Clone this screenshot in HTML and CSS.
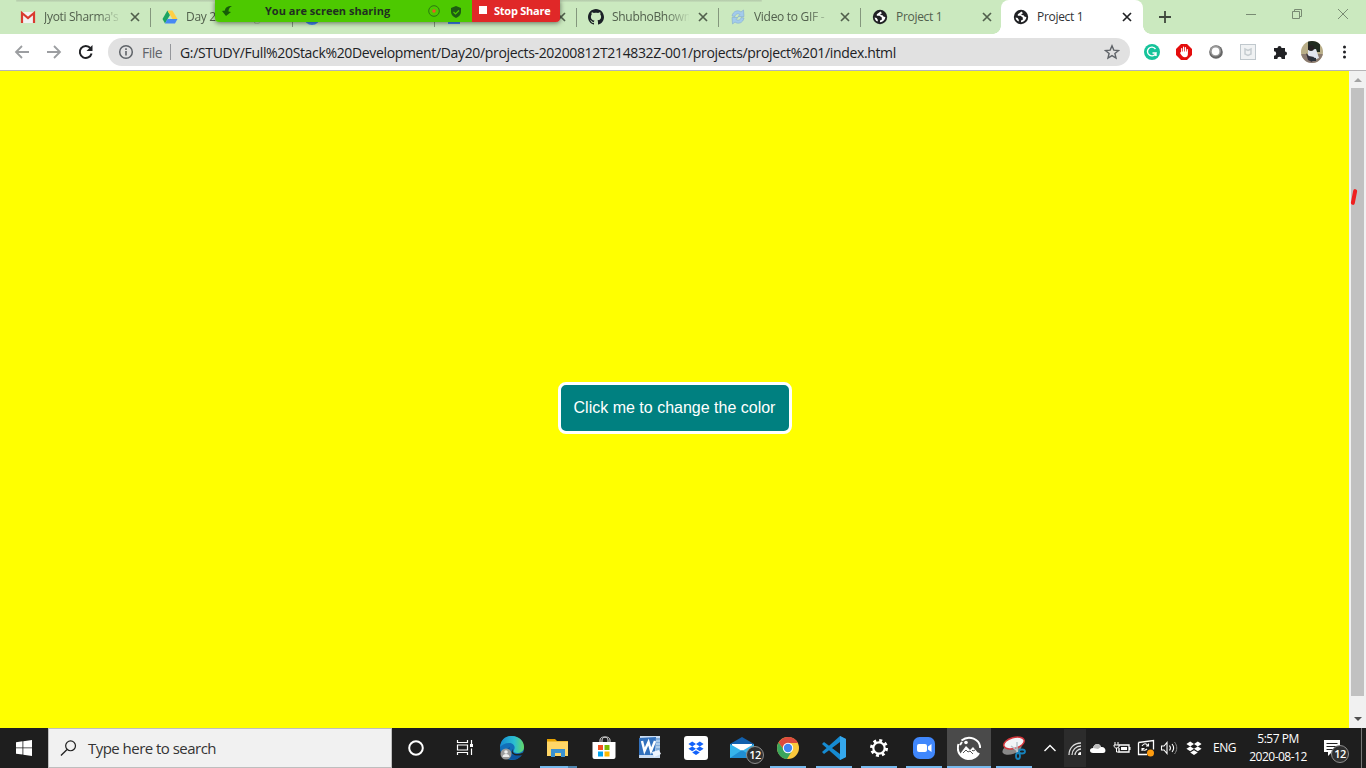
FILE: index.html
```html
<!DOCTYPE html>
<html lang="en">
<head>
<meta charset="utf-8">
<title>Project 1</title>
<link rel="stylesheet" href="styles.css">
</head>
<body>
<svg class="defs" width="0" height="0">
  <symbol id="close" viewBox="0 0 10 10"><path d="M1 1l8 8M9 1L1 9" stroke="currentColor" stroke-width="1.7" fill="none"/></symbol>
  <symbol id="globe" viewBox="0 0 16 16"><circle cx="8" cy="8" r="7.2" fill="#202124"/><path d="M8.500 2.600L6.500 4l-1.700 1.200v1.600h2.700l2.300 1.700v2.200l-1.800.8v1.700c3-.2 5.200-2.400 5.400-5.200l-1.700-.3-1.200-1.400-2-.2v-1.200l1.500-.6zM2.600 8.500c.3 1.900 1.300 3.300 3 4.100l.3-1.700-1.300-2z" fill="#fff"/></symbol>
  <symbol id="box" viewBox="0 0 16 15"><path d="M4.2.6L8 3 4.2 5.400.4 3zM11.800.6L15.600 3l-3.800 2.400L8 3zM.4 7.800l3.800-2.400L8 7.800l-3.800 2.400zM8 7.800l3.800-2.400 3.800 2.400-3.800 2.400zM4.200 11.500L8 9.200l3.800 2.300L8 14z" fill="currentColor"/></symbol>
</svg>
<div class="screen">
  <header class="tabs">
    <div class="tab"><svg class="fav" viewBox="0 0 16 16"><path d="M1 3h14v11H1z" fill="#f1f1f1"/><path d="M2 14V4l6 5 6-5v10" fill="none" stroke="#d93a2f" stroke-width="2.200"/></svg><span class="name fade">Jyoti Sharma's</span><svg class="x"><use href="#close"/></svg></div>
    <div class="tab"><svg class="fav" viewBox="0 0 16 16"><path d="M5.400 1.500L.5 10 3 14.500 8 6z" fill="#1da462"/><path d="M5.400 1.500h5L15.500 10h-5z" fill="#ffcf44"/><path d="M5.500 10h10L13 14.500H3z" fill="#4688f4"/></svg><span class="name fade">Day 20 - Goog</span><svg class="x"><use href="#close"/></svg></div>
    <div class="tab"><svg class="fav" viewBox="0 0 16 16"><circle cx="8" cy="8" r="8" fill="#4285f4"/></svg></div>
    <div class="tab"><svg class="fav" viewBox="0 0 16 16"><path d="M2 1h12v14H2z" fill="#4285f4"/></svg><span class="name"></span><svg class="x"><use href="#close"/></svg></div>
    <div class="tab"><svg class="fav" viewBox="0 0 16 16"><path d="M8 0C3.600 0 0 3.600 0 8c0 3.500 2.300 6.500 5.500 7.600.4.1.5-.2.5-.4v-1.400c-2.200.5-2.700-1-2.700-1-.4-.9-.9-1.100-.9-1.100-.7-.5.1-.5.1-.5.8.1 1.200.8 1.200.8.7 1.300 1.900.9 2.300.7.1-.5.3-.9.5-1.100-1.800-.2-3.600-.9-3.600-4 0-.9.3-1.600.8-2.200-.1-.2-.4-1 .1-2.100 0 0 .7-.2 2.200.8 1.300-.4 2.700-.4 4 0 1.500-1 2.200-.8 2.200-.8.4 1.100.2 1.900.1 2.100.5.6.8 1.300.8 2.200 0 3.100-1.900 3.700-3.700 3.900.3.3.6.8.6 1.500v2.200c0 .2.1.5.6.4C13.700 14.500 16 11.500 16 8c0-4.400-3.600-8-8-8z" fill="#1b2126"/></svg><span class="name fade">ShubhoBhowm</span><svg class="x"><use href="#close"/></svg></div>
    <div class="tab"><svg class="fav" viewBox="0 0 16 16"><path d="M2 7C3 2 8 .5 11 3l2.500-2 .5 6.500H8l2-2C7.500 4 5.500 5 5 7.500zM14 9c-1 5-6 6.500-9 4l-2.500 2L2 8.500h6l-2 2c2.500 1.500 4.500.5 5-2z" fill="#a3cbec" stroke="#7fabd2" stroke-width=".6"/></svg><span class="name fade">Video to GIF -</span><svg class="x"><use href="#close"/></svg></div>
    <div class="tab"><svg class="fav"><use href="#globe"/></svg><span class="name">Project 1</span><svg class="x"><use href="#close"/></svg></div>
    <div class="tab active"><svg class="fav"><use href="#globe"/></svg><span class="name">Project 1</span><svg class="x"><use href="#close"/></svg></div>
    <svg class="plus" viewBox="0 0 12 12"><path d="M6 0v12M0 6h12" stroke="#40483d" stroke-width="1.800"/></svg>
    <div class="window-buttons">
      <svg viewBox="0 0 12 12"><path d="M1 6.500h10" /></svg>
      <svg viewBox="0 0 12 12"><path d="M1.500 3.500h7v7h-7zM3.500 3V1.500h7v7H9"/></svg>
      <svg viewBox="0 0 12 12"><path d="M1 1l10 10M11 1L1 11"/></svg>
    </div>
  </header>
  <div class="top-shadow"></div>
  <div class="share">
    <div class="share-green">
      <svg class="share-arrow" viewBox="0 0 12 12"><path d="M11 1C6 1 4 3 4 5.500L1 6l4 5 5-4-2.500-.6C7.500 4 8.500 2 11 1z" fill="#165d08"/></svg>
      <span class="share-text">You are screen sharing</span>
      <svg class="rec" viewBox="0 0 12 12"><circle cx="6" cy="6" r="5.300" fill="none" stroke="#2b7a12"/><circle cx="6" cy="6" r="1.700" fill="#f05328"/></svg>
      <svg class="shield" viewBox="0 0 12 12"><path d="M6 0l5 2v4c0 3-2.500 5-5 6-2.500-1-5-3-5-6V2z" fill="#1d5d12"/><path d="M3.500 6l2 2 3.500-3.500" fill="none" stroke="#4dc900" stroke-width="1.200"/></svg>
    </div>
    <div class="share-stop"><i class="stop"></i><span>Stop Share</span></div>
  </div>
  <nav class="toolbar">
    <div class="nav-icons">
      <svg viewBox="0 0 16 16"><path d="M15 8H2M8 2L2 8l6 6" stroke="#9c9ea1"/></svg>
      <svg viewBox="0 0 16 16"><path d="M1 8h13M8 2l6 6-6 6" stroke="#9c9ea1"/></svg>
      <svg viewBox="0 0 16 16"><path d="M13.600 9.500A6 6 0 1 1 12.500 4.200" stroke="#202124" stroke-width="2"/><path d="M14.500 1v6h-6z" fill="#202124"/></svg>
    </div>
    <div class="address">
      <svg class="info" viewBox="0 0 16 16"><circle cx="8" cy="8" r="6.300" fill="none" stroke="#5f6368" stroke-width="1.500"/><path d="M8 7v4.500M8 4.300V6" stroke="#5f6368" stroke-width="1.600"/></svg>
      <span class="scheme">File</span><i class="bar"></i>
      <span class="url">G:/STUDY/Full%20Stack%20Development/Day20/projects-20200812T214832Z-001/projects/project%201/index.html</span>
      <svg class="star" viewBox="0 0 16 16"><path d="M8 1.800l1.800 4.300 4.700.4-3.600 3 1.100 4.600-4-2.500-4 2.500 1.100-4.600-3.600-3 4.700-.4z" fill="none" stroke="#5f6368" stroke-width="1.400"/></svg>
    </div>
    <div class="extensions">
      <svg viewBox="0 0 16 16"><circle cx="8" cy="8" r="8" fill="#15c39a"/><path d="M11.500 5A4.400 4.400 0 1 0 12 9H8.500M12 9v3" fill="none" stroke="#fff" stroke-width="1.400"/></svg>
      <svg viewBox="0 0 16 16"><path d="M5 0h6l5 5v6l-5 5H5l-5-5V5z" fill="#e40d0d"/><path d="M5.700 8V4.500M7.600 8V3.200M9.500 8V3.700M11.300 8V5.500" stroke="#fff" stroke-width="1.200" stroke-linecap="round"/><path d="M5.200 7.500h6.700V10c0 2-1 3.300-3 3.300S6 12 4 9z" fill="#fff"/></svg>
      <svg viewBox="0 0 16 16"><circle cx="8" cy="8" r="6.800" fill="#666"/><circle cx="7.500" cy="7" r="5.500" fill="#999"/><circle cx="7.600" cy="7.400" r="3.800" fill="#fff"/></svg>
      <svg viewBox="0 0 16 16"><rect x=".5" y=".5" width="15" height="15" fill="#f0f2f3" stroke="#c0c8cd"/><path d="M5 5l3 1.500L11 5v5l-3 1.500L5 10z" fill="none" stroke="#c6cdd1" stroke-width="1.500"/></svg>
      <svg viewBox="0 0 16 16"><path d="M2 4h3.500a2 2 0 1 1 4 0H13v3.500a2 2 0 1 1 0 4V15H9.700a2.200 2.200 0 0 0-4.400 0H2v-3.300a2.200 2.200 0 0 0 0-4.400z" fill="#202124"/></svg>
      <svg class="avatar" viewBox="0 0 22 22"><clipPath id="face"><circle cx="11" cy="11" r="11"/></clipPath><g clip-path="url(#face)"><path d="M0 0h22v22H0z" fill="#b9ae88"/><path d="M7 0h12v11H7z" fill="#202b20"/><path d="M0 13h22v9H0z" fill="#8b7b70"/><path d="M7 9l8-1 3 9-5 2-6-3z" fill="#e1e5ef"/><circle cx="10" cy="7" r="3" fill="#252121"/><path d="M5 12l3 3 5 1-2 5-4-2z" fill="#36313a"/><path d="M9 16l6 1v3h-5z" fill="#29313a"/></g></svg>
      <svg viewBox="0 0 16 16"><g fill="#202124"><circle cx="8.500" cy="3" r="1.500"/><circle cx="8.500" cy="8" r="1.500"/><circle cx="8.500" cy="13" r="1.500"/></g></svg>
    </div>
  </nav>
  <div class="viewport">
    <main class="page"><button class="color-button">Click me to change the color</button></main>
    <div class="scrollbar"><i class="up"></i><div class="thumb"></div><i class="down"></i></div>
    <i class="pen-mark"></i>
  </div>
  <footer class="taskbar">
    <div class="start"><svg viewBox="0 0 16 16"><path d="M0 2.200l6.500-.9v6.200H0zM7.300 1.200L16 0v7.500H7.300zM0 8.300h6.500v6.300L0 13.700zM7.300 8.300H16V16l-8.700-1.300z" fill="#fff"/></svg></div>
    <div class="search"><svg viewBox="0 0 18 18"><circle cx="11.200" cy="6.700" r="5.200" fill="none" stroke="#222" stroke-width="1.300"/><path d="M7.500 10.500L1 17" stroke="#222" stroke-width="1.400"/></svg><span>Type here to search</span></div>
    <div class="apps">
      <div class="app"><svg viewBox="0 0 24 24"><circle cx="12" cy="12" r="6.800" fill="none" stroke="#fff" stroke-width="2"/></svg></div>
      <div class="app"><svg viewBox="0 0 24 24"><path d="M4.500 4v2.500h10V4M4.500 19v-2.500h10V19M4.500 9h10v5h-10zM18.500 4v4M18.500 12.500V19" fill="none" stroke="#fff" stroke-width="1.200"/><path d="M17 8h3v3h-3z" fill="#fff"/></svg></div>
      <div class="app"><svg viewBox="0 0 24 24"><defs><linearGradient id="edge"><stop stop-color="#168bd2"/><stop offset=".6" stop-color="#2bbfd1"/><stop offset="1" stop-color="#65d866"/></linearGradient></defs><circle cx="12" cy="12" r="12" fill="#126fb9"/><path d="M0 11C1 3 6 0 12 0c7 0 12 5 12 11 0 4-3 6-7 6-3 0-4-1-3-3 2-4-1-7-5-7-4 0-7 2-9 4z" fill="url(#edge)"/><path d="M10 11c-2 6 3 10 11 8l1-1c-2 4-7 7-12 5-5-3-5-10 0-12z" fill="#0c55a0"/><path d="M13 13c-2 4 3 6.500 9 4l2-1v2l-2 1c-8 2-13-2-9-6z" fill="#202020"/><circle cx="6" cy="18" r="5.500" fill="#9b9b9b"/><circle cx="6" cy="16" r="1.800" fill="#eee"/><path d="M2.500 21c0-4 7-4 7 0z" fill="#eee"/></svg></div>
      <div class="app explorer"><svg viewBox="0 0 24 24"><path d="M1 3h8l2 2h11v4H1z" fill="#e5a100"/><path d="M1 5.500h21V20H1z" fill="#ffd667"/><path d="M5 21v-8h14v8h-4v-4H9v4z" fill="#3b91d0"/></svg></div>
      <div class="app"><svg viewBox="0 0 24 24"><path d="M8 8V4c0-4 8-4 8 0v4M10 8V4c0-4 8-4 8 0v2" fill="none" stroke="#ddd"/><path d="M.5 6h23v15q0 2-2 2h-19q-2 0-2-2z" fill="#fff"/><path d="M6 9h5v5H6z" fill="#f25022"/><path d="M12.500 9h5v5h-5z" fill="#7fba00"/><path d="M6 15.500h5v5H6z" fill="#00a4ef"/><path d="M12.500 15.500h5v5h-5z" fill="#ffb900"/></svg></div>
      <div class="app word"><svg viewBox="0 0 24 24"><path d="M2 0h20v22H1z" fill="#cbddf3"/><path d="M1 2l17-1-1 18H1z" fill="#3271bd"/><path d="M18 2h4v14h-4z" fill="#83aedb"/><path d="M18 5h4M18 8h4M18 11h4" stroke="#d9e9f8"/><path d="M4 5l2.500 10 4-9 2.500 9 4-10" fill="none" stroke="#fff" stroke-width="2.400"/><path d="M14 16l7-2 2 4-7 3z" fill="#edf4ff"/></svg></div>
      <div class="app"><svg viewBox="0 0 24 24"><rect width="24" height="24" rx="3" fill="#fff"/><svg x="4" y="5" width="16" height="15" color="#1262fa"><use href="#box"/></svg></svg></div>
      <div class="app mail"><svg viewBox="0 0 24 24"><path d="M0 8L12 1l12 7v14H0z" fill="#1260ad"/><path d="M2 8h20v8H2z" fill="#fff"/><path d="M0 8l12 7 12-7v14H0z" fill="#36b5ec"/><path d="M0 22l12-8 12 8z" fill="#208ed2"/></svg><b class="badge">12</b></div>
      <div class="app running"><svg viewBox="0 0 24 24"><circle cx="12" cy="12" r="11" fill="#fbc83b"/><path d="M2.500 6.500C8-2 19 0 22 7H12L8 14z" fill="#dd4b3e"/><path d="M2.500 6.500C-1 13 2 22 11 23l5-8-8-1z" fill="#3ba55c"/><circle cx="12" cy="12" r="5.200" fill="#fff"/><circle cx="12" cy="12" r="4.200" fill="#4285f4"/></svg></div>
      <div class="app running"><svg viewBox="0 0 24 24"><path d="M18 0l6 3v18l-6 3L0 8l2-2 16 12V6L2 18l-2-2z" fill="#168bd1"/><path d="M18 0l6 3v18l-6 3z" fill="#35a8ed"/><path d="M18 7v10l-7-5z" fill="#1e1e1e"/></svg></div>
      <div class="app running"><svg viewBox="0 0 24 24"><circle cx="12" cy="12" r="5.700" fill="none" stroke="#fff" stroke-width="2.200"/><circle cx="12" cy="12" r="7.500" fill="none" stroke="#fff" stroke-width="3" stroke-dasharray="2.900 2.990"/></svg></div>
      <div class="app running"><svg viewBox="0 0 24 24"><rect x="1" y="1" width="22" height="22" rx="6.500" fill="#4087fc"/><rect x="5" y="8" width="10" height="8" rx="2" fill="#fff"/><path d="M16 10.500L19.500 8v8L16 13.500z" fill="#fff"/></svg></div>
      <div class="app running selected"><svg viewBox="0 0 24 24"><path d="M4.500 4.500C12-1.500 23 3 23.200 12M1.500 8C-1 16 4 22 11 23c5 0 9-2 11-6" fill="none" stroke="#fff" stroke-width="2"/><path d="M3 18l6-8 4 4 3-3 6 7c-5 6-14 7-19 0z" fill="#fff"/><path d="M6 17l3-3 2 2 2-1 3 3M15 14l1 1 2-1" stroke="#555" fill="none"/><circle cx="9" cy="6.500" r="1.800" fill="#fff"/><path d="M3 9l2-3" stroke="#fff" stroke-width="2"/></svg></div>
      <div class="app running"><svg viewBox="0 0 24 24"><ellipse cx="10" cy="13" rx="10" ry="5" fill="#888" transform="rotate(-20 10 13)"/><ellipse cx="12" cy="7" rx="10.500" ry="5.500" fill="#f2f5f7" stroke="#d4363b" stroke-width="1.500" transform="rotate(-16 12 7)"/><path d="M9 10l8 6M15 6v12" stroke="#b9c6cd" stroke-width="1.500"/><g fill="none" stroke="#1683bd" stroke-width="1.800"><ellipse cx="20" cy="15.500" rx="3" ry="2"/><ellipse cx="16" cy="20" rx="2" ry="3"/></g></svg></div>
    </div>
    <div class="tray">
      <svg viewBox="0 0 24 24"><path d="M6.500 15l5.500-5.500 5.500 5.500" fill="none" stroke="#fff" stroke-width="1.400"/></svg>
      <div class="wifi"><svg viewBox="0 0 24 24"><g fill="none" stroke="#ddd" stroke-width="1.300"><path d="M6 19C6 12 11 7 18 7M9 19c0-5 4-9 9-9M12 19c0-3 3-6 6-6"/></g><path d="M15 19c0-2 1-3 3-3v3z" fill="#fff"/></svg></div>
      <svg viewBox="0 0 24 24"><path d="M7 17c-4 0-4-5 0-5 1-5 7-5 8-1 5-1 6 6 2 6z" fill="#fff"/><path d="M7 12c1-5 7-5 8-1l-3 2z" fill="#bbb"/></svg>
      <svg viewBox="0 0 24 24"><path d="M9 9h10v7H9v-4" fill="none" stroke="#fff" stroke-width="1.300"/><path d="M11 11h6v3h-6zM19 11h1.500v3H19z" fill="#fff"/><path d="M5 6v3M8 6v3M4 9h5v2c-3 2-5 1-5-2M6.500 12v4H9" fill="none" stroke="#fff"/></svg>
      <svg viewBox="0 0 24 24"><path d="M4.500 6.500l15-2v9M4.500 6.500v12H13" fill="none" stroke="#fff" stroke-width="1.300"/><path d="M8 10c2-3 4-3 6-.500M14.500 7.500V10H12M13 13c-2 2-4 1.500-5-.500M8 15v-2.500h2.500" fill="none" stroke="#fff" stroke-width="1.100"/><circle cx="16.500" cy="17" r="3.500" fill="#ff9d10"/></svg>
      <svg viewBox="0 0 24 24"><path d="M4.500 10H7l3-3.500v11L7 14H4.500zM12.500 9.500c1.500 2 1.500 3 0 5M15 8c2.500 3 2.500 5 0 8" fill="none" stroke="#fff" stroke-width="1.100"/><path d="M17.500 6c3 4 3 8 0 12" fill="none" stroke="#888"/></svg>
      <div class="dropbox"><svg viewBox="0 0 16 15"><use href="#box"/></svg></div>
    </div>
    <span class="language">ENG</span>
    <div class="clock"><span>5:57 PM</span><span>2020-08-12</span></div>
    <div class="notice"><svg viewBox="0 0 18 18"><path d="M1 1h16v12H9l-4 4v-4H1z" fill="#fff"/><path d="M3.500 4.500h11M3.500 7.500h11M3.500 10.500h8" stroke="#222"/></svg><b class="badge">12</b></div>
    <i class="desktop-edge"></i>
  </footer>
</div>
</body>
</html>
```

FILE: styles.css
```css
* { box-sizing: border-box; }
body { margin: 0; overflow: hidden; font-family: "Open Sans", "Noto Sans", sans-serif; }
svg { display: block; flex: none; }
.defs { position: absolute; }
.screen { position: relative; width: 1366px; height: 768px; display: flex; flex-direction: column; overflow: hidden; }
.tabs { height: 34px; flex: none; display: flex; padding-left: 7px; background: #cbe9bf; }
.tab { position: relative; width: 142px; flex: none; display: flex; align-items: center; padding-left: 13px; color: #52604d; font-size: 12px; }
.tab + .tab:not(.active)::before { content: ""; position: absolute; left: 1px; top: 8px; width: 1px; height: 19px; background: #84977d; }
.fav { width: 16px; height: 16px; }
.name { width: 77px; height: 18px; line-height: 17px; margin-left: 8px; white-space: nowrap; letter-spacing: -.3px; }
.fade { -webkit-mask-image: linear-gradient(90deg, #000 70%, transparent 102%); mask-image: linear-gradient(90deg, #000 70%, transparent 102%); }
.x { width: 10px; height: 10px; margin-left: 9px; color: #52604d; }
.active { padding-left: 12px; background: #fff; border-radius: 8px 8px 0 0; color: #303236; }
.active .x { margin-left: 8px; color: #202124; }
.active::before, .active::after { content: ""; position: absolute; bottom: 0; width: 8px; height: 8px; }
.active::before { left: -8px; background: radial-gradient(circle at 0 0, transparent 7.5px, #fff 8px); }
.active::after { right: -8px; background: radial-gradient(circle at 100% 0, transparent 7.5px, #fff 8px); }
.plus { width: 12px; height: 12px; margin: 11px 0 0 16px; }
.window-buttons { display: flex; gap: 34px; margin: 8px 0 0 74px; }
.window-buttons svg { width: 12px; height: 12px; fill: none; stroke: #798b73; stroke-width: 1; }
.top-shadow { position: absolute; top: 0; left: 16px; width: 746px; height: 2px; border-radius: 2px; background: linear-gradient(#b3c9a9, #c5dfba); }
.share { position: absolute; z-index: 2; left: 215px; top: 0; width: 345px; height: 22px; display: flex; border-radius: 0 0 4px 4px; overflow: hidden; box-shadow: 0 1px 5px #0008; font-size: 11px; font-weight: 700; }
.share-green { width: 257px; display: flex; align-items: center; padding-left: 6px; background: #4dc900; color: #203020; }
.share-arrow { width: 12px; height: 12px; }
.share-text { width: 127px; margin-left: 32px; line-height: 20px; white-space: nowrap; }
.rec { width: 12px; height: 12px; margin-left: 36px; }
.shield { width: 12px; height: 12px; margin: 2px 0 0 10px; }
.share-stop { width: 88px; display: flex; align-items: center; padding: 0 0 2px 7px; background: #e02828; color: #fff; white-space: nowrap; letter-spacing: -.25px; }
.stop { width: 8px; height: 8px; margin-right: 7px; background: #fff; }
.toolbar { height: 37px; flex: none; display: flex; align-items: center; background: #fff; border-bottom: 1px solid #b6b4b6; }
.nav-icons { width: 108px; display: flex; gap: 16px; padding-left: 14px; }
.nav-icons svg { width: 16px; height: 16px; fill: none; stroke-width: 1.8; }
.address { width: 1022px; height: 28px; display: flex; align-items: center; padding-left: 10px; border-radius: 14px; background: #e1e1e1; font-size: 14px; }
.info, .star { width: 16px; height: 16px; }
.scheme { width: 22px; margin-left: 8px; color: #5f6368; letter-spacing: -.5px; }
.bar { width: 1px; height: 16px; margin-left: 6px; background: #95979b; }
.url { width: 717px; margin-left: 9px; color: #202124; letter-spacing: -.345px; white-space: nowrap; }
.star { margin-left: 207px; }
.extensions { display: flex; align-items: center; gap: 16px; padding-left: 14px; }
.extensions svg { width: 16px; height: 16px; }
.extensions .avatar { width: 22px; height: 22px; margin: 0 -3px; }
.viewport { position: relative; height: 657px; flex: none; display: flex; }
.page { width: 1349px; padding-top: 17px; display: flex; align-items: center; justify-content: center; background: #ff0; }
.color-button { width: 234px; height: 52px; padding: 0; border: 3px solid #fff; border-radius: 8px; background: teal; color: #fff; font: 16px "Liberation Sans", sans-serif; white-space: nowrap; }
.scrollbar { width: 17px; display: flex; flex-direction: column; align-items: center; background: #f1f1f1; }
.thumb { width: 13px; height: 608px; background: #c1c1c1; }
.up, .down { border: 4px solid transparent; }
.up { margin: 3px 0 6px; border-bottom-color: #a3a3a3; }
.down { margin-top: 21px; border-top-color: #505050; }
.pen-mark { position: absolute; left: 1352px; top: 118px; width: 4px; height: 16px; border-radius: 2px; background: #ef2020; transform: rotate(11deg); }
.taskbar { height: 40px; flex: none; display: flex; background: #1e1e1e; color: #fff; }
.start { width: 48px; padding: 12px 0 0 16px; }
.start svg { width: 16px; height: 16px; }
.search { width: 344px; display: flex; align-items: center; gap: 11px; padding-left: 11px; border: 1px solid #bebebe; background: #f1f1f1; color: #343434; font-size: 15px; letter-spacing: -.53px; }
.search svg { width: 17px; height: 18px; }
.apps { display: grid; grid-template-columns: 48px 49px repeat(7, 46px) repeat(5, 45px); width: 645px; }
.app { position: relative; display: flex; align-items: center; justify-content: center; }
.app > svg { width: 24px; height: 24px; }
.running::after, .explorer::after { content: ""; position: absolute; bottom: 0; width: 36px; height: 2px; background: #76b9ed; }
.explorer::after { width: 37px; background: linear-gradient(90deg, #76b9ed 28px, #5086af 28px); }
.selected { margin: 0 0 0 1px; background: #4a4a4a; }
.selected::after { width: 44px; }
.badge { position: absolute; width: 18px; height: 18px; border: 1px solid #8e8e8e; border-radius: 50%; background: #303030; color: #fff; font-size: 11px; line-height: 15px; font-weight: 600; text-align: center; letter-spacing: -.5px; }
.mail .badge { left: 27px; top: 18px; }
.tray { display: grid; grid-template-columns: 26px 24px 22px 26px 22px 24px 26px; align-items: center; justify-items: center; width: 170px; }
.tray > svg, .wifi > svg { width: 24px; height: 24px; }
.wifi { width: 22px; height: 38px; display: flex; align-items: center; justify-content: center; background: #2c2c2c; }
.dropbox > svg { width: 16px; height: 15px; }
.language { width: 27px; margin-left: 6px; line-height: 39px; font-size: 12px; letter-spacing: -.5px; }
.clock { width: 60px; margin-left: 8px; padding-top: 2px; display: flex; flex-direction: column; align-items: center; font-size: 12px; line-height: 18px; letter-spacing: -.5px; white-space: nowrap; }
.notice { position: relative; width: 53px; padding: 11px 0 0 15px; }
.notice svg { width: 18px; height: 18px; }
.notice .badge { left: 23px; top: 17px; }
.desktop-edge { width: 1px; background: #777; }
```
